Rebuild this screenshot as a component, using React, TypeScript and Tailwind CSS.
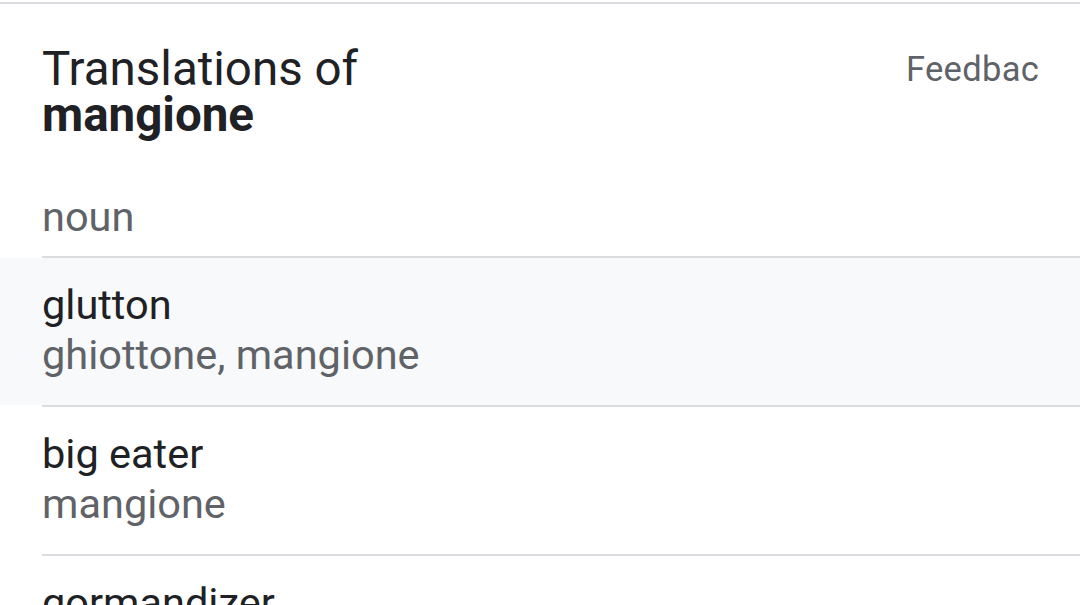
export default function App() {
  const rows = [
    { t: "glutton", s: "ghiottone, mangione", hl: true },
    { t: "big eater", s: "mangione", hl: false },
    { t: "gormandizer", s: "ghiottone", hl: false },
  ];
  return (
    <div
      className="w-[1080px] h-[605px] overflow-hidden bg-white"
      style={{ fontFamily: "Roboto, 'Noto Sans', sans-serif" }}
    >
      <div className="h-[2px]" />
      <div className="h-[2px] bg-[#dadce0]" />
      <div className="flex items-start justify-between pl-[42px] pt-[42px]">
        <div className="text-[#202124] text-[47.5px] leading-[46px]">
          <div>Translations of</div>
          <div className="font-bold">mangione</div>
        </div>
        <div className="w-[134px] mr-[40px] mt-[3px] overflow-hidden whitespace-nowrap text-[34.5px] leading-[40px] tracking-[0.3px] text-[#5f6368]">
          Feedback
        </div>
      </div>
      <div className="pl-[42px] pt-[54px] pb-[14px] text-[41.5px] leading-[50px] text-[#5f6368]">
        noun
      </div>
      {rows.map((r) => (
        <div key={r.t}>
          <div className="ml-[42px] h-[2px] bg-[#dadce0]" />
          <div
            className={
              (r.hl ? "bg-[#f8f9fa] " : "bg-white ") +
              "pl-[42px] pt-[22px] pb-[25px] text-[41.5px] leading-[50px]"
            }
          >
            <div className="text-[#202124]">{r.t}</div>
            <div className="text-[#5f6368]">{r.s}</div>
          </div>
        </div>
      ))}
    </div>
  );
}
